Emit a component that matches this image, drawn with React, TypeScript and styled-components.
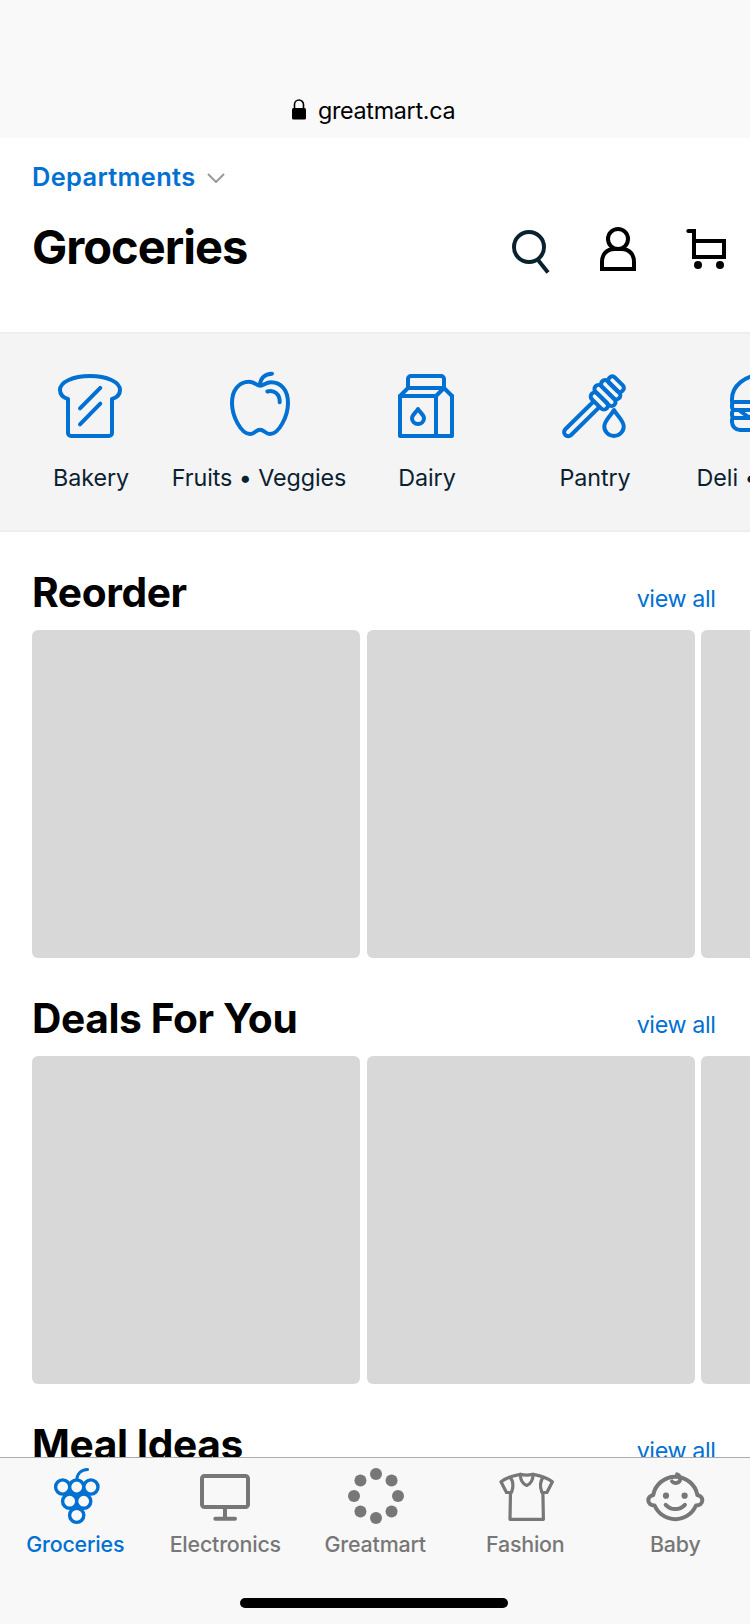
import React from 'react';
import styled, { createGlobalStyle } from 'styled-components';

const BLUE = '#0071d2';
const INK = '#0a2230';
const GRAY = '#777777';

const GlobalStyle = createGlobalStyle`
  * { box-sizing: border-box; }
  body {
    margin: 0;
    background: #fff;
    font-family: Inter, 'Liberation Sans', sans-serif;
  }
  h1, h2 { margin: 0; }
`;

const Screen = styled.div`
  display: flex;
  flex-direction: column;
  width: 750px;
  height: 1624px;
  overflow: hidden;
  background: #fff;
`;

const AddressBar = styled.div`
  flex: none;
  display: flex;
  align-items: flex-end;
  gap: 12px;
  height: 138px;
  padding: 0 0 13px 291px;
  background: #f9f9f9;
`;

const Address = styled.span`
  font-size: 23.3px;
  line-height: 28px;
  letter-spacing: -0.3px;
  color: #000;
`;

const LockIcon = styled.svg`
  flex: none;
  width: 15px;
  height: 21px;
  margin-bottom: 5px;
`;

const Header = styled.header`
  flex: none;
  height: 194px;
  padding: 24px 22px 0 32px;
`;

const DepartmentPicker = styled.button`
  display: flex;
  align-items: center;
  gap: 12px;
  height: 30px;
  padding: 0;
  border: 0;
  background: none;
  font: 600 25.4px/30px Inter, 'Liberation Sans', sans-serif;
  letter-spacing: 0.35px;
  color: ${BLUE};
`;

const TitleRow = styled.div`
  display: flex;
  justify-content: space-between;
  margin-top: 26px;
`;

const PageTitle = styled.h1`
  padding-top: 1px;
  font-size: 47px;
  line-height: 56px;
  font-weight: 700;
  letter-spacing: -1px;
`;

const Actions = styled.nav`
  display: flex;
  gap: 44px;
  padding-top: 8px;
`;

const ActionIcon = styled.svg<{ $color?: string }>`
  width: 44px;
  height: 48px;
  fill: none;
  stroke: ${(p) => p.$color ?? '#000'};
  stroke-width: 4;
`;

const CategoryBand = styled.nav`
  flex: none;
  display: flex;
  height: 200px;
  padding: 40px 0 0 6px;
  border-top: 2px solid #eeeeee;
  border-bottom: 2px solid #eeeeee;
  background: #f4f4f4;
  overflow: hidden;
`;

const Category = styled.div`
  flex: none;
  display: flex;
  flex-direction: column;
  align-items: center;
  gap: 26px;
  width: 168px;
`;

const CategoryIcon = styled.svg`
  width: 64px;
  height: 64px;
  overflow: visible;
  fill: none;
  stroke: ${BLUE};
  stroke-width: 4;
  stroke-linecap: round;
  stroke-linejoin: round;
`;

const CategoryLabel = styled.span`
  padding-left: 2px;
  font-size: 23.3px;
  line-height: 28px;
  letter-spacing: -0.08px;
  white-space: nowrap;
  color: ${INK};
`;

const Content = styled.main`
  flex: 1;
  min-height: 0;
  overflow: hidden;
`;

const Shelf = styled.section`
  padding: 37px 0 0 32px;
`;

const ShelfHead = styled.div`
  display: flex;
  justify-content: space-between;
  align-items: baseline;
  height: 48px;
  padding-right: 34.5px;
`;

const ShelfTitle = styled.h2`
  font-size: 40.7px;
  line-height: 48px;
  font-weight: 700;
  letter-spacing: -0.4px;
`;

const ViewAll = styled.a`
  font-size: 23.3px;
  line-height: 28px;
  letter-spacing: -0.38px;
  color: ${BLUE};
`;

const Cards = styled.div`
  display: flex;
  gap: 6.5px;
  margin-top: 13px;
  overflow: hidden;
`;

const Card = styled.div`
  flex: none;
  width: 328px;
  height: 328px;
  border-radius: 6px;
  background: #d8d8d8;
`;

const TabBar = styled.footer`
  flex: none;
  display: flex;
  flex-direction: column;
  align-items: center;
  height: 167px;
  border-top: 1px solid #acacac;
  background: #f8f8f8;
`;

const Tabs = styled.nav`
  display: flex;
  width: 100%;
  height: 140px;
  padding-top: 9px;
`;

const Tab = styled.div<{ $active?: boolean }>`
  flex: 1;
  display: flex;
  flex-direction: column;
  align-items: center;
  gap: 4px;
  color: ${(p) => (p.$active ? BLUE : GRAY)};
`;

const TabIcon = styled.svg`
  width: 60px;
  height: 60px;
  fill: none;
  stroke: currentColor;
  stroke-width: 4;
  stroke-linecap: round;
  stroke-linejoin: round;
`;

const TabLabel = styled.span`
  padding-left: 0.5px;
  font-size: 21.4px;
  line-height: 26px;
  font-weight: 500;
  letter-spacing: -0.2px;
`;

const HomeIndicator = styled.div`
  width: 268px;
  height: 10px;
  margin-right: 2px;
  border-radius: 5px;
  background: #000;
`;

const categories = [
  {
    label: 'Bakery',
    icon: (
      <>
        <path d="M10 25C5 23.5 2 20 2 16C2 8 15 2 32 2S62 8 62 16C62 20 59 23.500 54 25V59a3 3 0 0 1-3 3H13a3 3 0 0 1-3-3Z" />
        <path d="M22 34.300L42.300 13.800M22 50.300L42.300 29.700" />
      </>
    ),
  },
  {
    label: 'Fruits • Veggies',
    icon: (
      <g transform="translate(2 0)">
        <path d="M32 11.700C28 11.500 26.500 7.700 21 7.700C11 7.700 4 16 4 29C4 42 13 60 22 60C26.500 60 28 55.700 32 55.700S37.500 60 42 60C51 60 60 42 60 29C60 16 53 8.300 43 8.300C37.500 8.300 36 11.500 32 11.700Z" />
        <path d="M32 10.500C32.500 4 37 0 44 -0.300" />
        <path d="M39.300 17.500C46 15.500 52 20 51.700 28.300" />
      </g>
    ),
  },
  {
    label: 'Dairy',
    icon: (
      <>
        <path d="M6 22H42V62H6ZM58 22V62H42" />
        <path d="M14 14L6 22M50 14L42 22M50 14L58 22" />
        <path d="M14 14V5a3 3 0 0 1 3-3H47a3 3 0 0 1 3 3V14Z" />
        <path d="M24 35C22 38.500 18 41 18 44.300a6 5.700 0 0 0 12 0C30 41 26 38.500 24 35Z" />
      </>
    ),
  },
  {
    label: 'Pantry',
    icon: (
      <>
        <g transform="translate(54 10.200) rotate(45)">
          <rect x="-9.200" y="-4" width="18.400" height="8" rx="3.500" />
        </g>
        <g transform="translate(48.700 15.700) rotate(45)">
          <rect x="-12" y="-4" width="24" height="8" rx="4" />
        </g>
        <g transform="translate(43 21.500) rotate(45)">
          <rect x="-13.300" y="-4" width="26.600" height="8" rx="4" />
        </g>
        <g transform="translate(37.300 27) rotate(45)">
          <rect x="-10.500" y="-4" width="21" height="8" rx="4" />
        </g>
        <path d="M30.500 28.500L3.300 55.200a4.100 4.100 0 0 0 5.800 5.800L36.300 34.200" />
        <path d="M52 36C49 41.500 42.300 46.500 42.300 52.500a9.700 9.400 0 0 0 19.400 0C61.700 46.500 55 41.500 52 36Z" />
      </>
    ),
  },
  {
    label: 'Deli • Meals',
    icon: (
      <>
        <path d="M2 28V25C2 12 15 1 32 1S62 12 62 25V28" />
        <rect x="2" y="28" width="60" height="8" rx="3" />
        <rect x="2" y="36" width="60" height="8" rx="3" />
        <path d="M10 37L19 43.500L30 37" />
        <path d="M2 46a2 2 0 0 1 2-2H60a2 2 0 0 1 2 2V48a8 8 0 0 1-8 8H10a8 8 0 0 1-8-8Z" />
      </>
    ),
  },
];

const grapes = [
  [17.7, 20],
  [31.7, 20],
  [45.9, 20],
  [24.7, 34.2],
  [38.7, 34.2],
  [31.7, 48.3],
];

const dots = Array.from({ length: 8 }, (_, i) => [
  31 + 22 * Math.cos((i * Math.PI) / 4),
  29 + 22 * Math.sin((i * Math.PI) / 4),
]);

const tabs = [
  {
    label: 'Groceries',
    icon: (
      <>
        <path d="M19 24H45L32 46Z" fill="currentColor" />
        {grapes.map(([x, y]) => (
          <circle key={`${x}-${y}`} cx={x} cy={y} r="7.100" fill="#f8f8f8" strokeWidth="3.400" />
        ))}
        <path d="M31.700 13C32 7 36 2.800 42.500 2.600" strokeWidth="3" />
      </>
    ),
  },
  {
    label: 'Electronics',
    icon: (
      <>
        <rect x="7" y="9" width="46" height="31" rx="2.500" />
        <path d="M30 40V51.700M20.300 51.700H40" />
      </>
    ),
  },
  {
    label: 'Greatmart',
    icon: dots.map(([x, y], i) => <circle key={i} cx={x} cy={y} r="6" fill="currentColor" stroke="none" />),
  },
  {
    label: 'Fashion',
    icon: (
      <g strokeWidth="3.200">
        <path d="M15.500 25.500L15 52.300H48.400L47.900 25.500" />
        <path d="M25.300 7.300C18 8.500 11 11 6 14.800L11.500 25.500H16.500C18.500 20 18 14 15.500 10.500" />
        <path d="M38.100 7.300C45.400 8.500 52.400 11 57.400 14.800L51.900 25.500H46.900C44.900 20 45.400 14 47.900 10.500" />
        <path d="M25.300 7.300C29 8.300 34.400 8.300 38.100 7.300C38 12.500 35.500 17 31.700 18.500C27.900 17 25.400 12.500 25.300 7.300Z" />
      </g>
    ),
  },
  {
    label: 'Baby',
    icon: (
      <>
        <path d="M8.200 28A22.500 22.500 0 0 1 52.400 28C55.800 29 57.300 31 57.300 33.300C57.300 36.500 54.500 38.500 51 38.500A22.500 22.500 0 0 1 9.600 38.500C6.100 38.500 3.300 36.500 3.300 33.300C3.300 31 4.800 29 8.200 28Z" />
        <path d="M20.700 37.800C26 43.500 34.600 43.500 39.900 37.800" />
        <path d="M27 14.300C29 17 35.200 16.500 35.200 12C35.200 9.500 34 8 32 7.300" strokeWidth="3.800" />
        <circle cx="21" cy="28.700" r="3.100" fill="currentColor" stroke="none" />
        <circle cx="39.600" cy="28.700" r="3.100" fill="currentColor" stroke="none" />
      </>
    ),
  },
];

export default function App() {
  return (
    <Screen>
      <GlobalStyle />
      <AddressBar>
        <LockIcon viewBox="0 0 15 21">
          <path d="M3.500 10V5.500a4.500 4.500 0 0 1 9 0V10" fill="none" stroke="#000" strokeWidth="1.600" />
          <rect x="1" y="9" width="14" height="11.600" rx="1.500" />
        </LockIcon>
        <Address>greatmart.ca</Address>
      </AddressBar>

      <Header>
        <DepartmentPicker>
          Departments
          <svg width="18" height="12" viewBox="0 0 18 12" fill="none" stroke="#999" strokeWidth="2">
            <path d="M1 3L9 11L17 3" />
          </svg>
        </DepartmentPicker>
        <TitleRow>
          <PageTitle>Groceries</PageTitle>
          <Actions>
            <ActionIcon viewBox="0 0 44 48" $color={INK}>
              <circle cx="21" cy="21" r="15" />
              <path d="M30 34L40 46.500" />
            </ActionIcon>
            <ActionIcon viewBox="0 0 44 48">
              <circle cx="22" cy="13" r="10" />
              <path d="M6 43V36C6 28 11 23 18.500 23H25.500C33 23 38 28 38 36V43Z" />
            </ActionIcon>
            <ActionIcon viewBox="0 0 44 48">
              <path d="M4 5H10V31H40V15H10" />
              <circle cx="4.300" cy="5" r="2" fill="#000" stroke="none" />
              <circle cx="14" cy="39" r="4" fill="#000" stroke="none" />
              <circle cx="36" cy="39" r="4" fill="#000" stroke="none" />
            </ActionIcon>
          </Actions>
        </TitleRow>
      </Header>

      <CategoryBand>
        {categories.map(({ label, icon }) => (
          <Category key={label}>
            <CategoryIcon viewBox="0 0 64 64">{icon}</CategoryIcon>
            <CategoryLabel>{label}</CategoryLabel>
          </Category>
        ))}
      </CategoryBand>

      <Content>
        {['Reorder', 'Deals For You', 'Meal Ideas'].map((title) => (
          <Shelf key={title}>
            <ShelfHead>
              <ShelfTitle>{title}</ShelfTitle>
              <ViewAll>view all</ViewAll>
            </ShelfHead>
            <Cards>
              <Card />
              <Card />
              <Card />
            </Cards>
          </Shelf>
        ))}
      </Content>

      <TabBar>
        <Tabs>
          {tabs.map(({ label, icon }, i) => (
            <Tab key={label} $active={i === 0}>
              <TabIcon viewBox="0 0 60 60">{icon}</TabIcon>
              <TabLabel>{label}</TabLabel>
            </Tab>
          ))}
        </Tabs>
        <HomeIndicator />
      </TabBar>
    </Screen>
  );
}
